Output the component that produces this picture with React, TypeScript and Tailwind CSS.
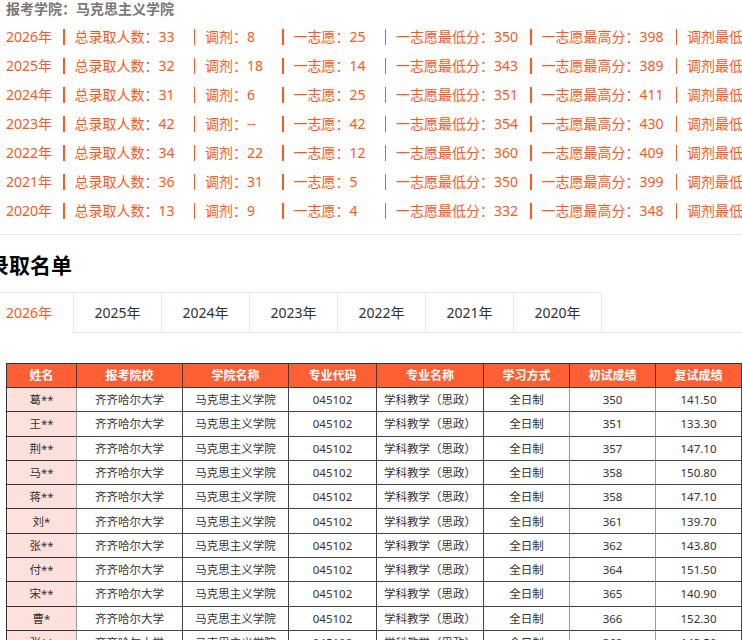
import React from "react";

// ─── Data ────────────────────────────────────────────────────────────────────

type YearStat = {
  year: string;
  total: string;
  adjust: string;
  first: string;
  min: string;
  max: string;
  adjustMin: string;
};

const stats: YearStat[] = [
  { year: "2026", total: "33", adjust: "8", first: "25", min: "350", max: "398", adjustMin: "--" },
  { year: "2025", total: "32", adjust: "18", first: "14", min: "343", max: "389", adjustMin: "--" },
  { year: "2024", total: "31", adjust: "6", first: "25", min: "351", max: "411", adjustMin: "--" },
  { year: "2023", total: "42", adjust: "--", first: "42", min: "354", max: "430", adjustMin: "--" },
  { year: "2022", total: "34", adjust: "22", first: "12", min: "360", max: "409", adjustMin: "--" },
  { year: "2021", total: "36", adjust: "31", first: "5", min: "350", max: "399", adjustMin: "--" },
  { year: "2020", total: "13", adjust: "9", first: "4", min: "332", max: "348", adjustMin: "--" },
];

const tabs = ["2026年", "2025年", "2024年", "2023年", "2022年", "2021年", "2020年"];

const headers = ["姓名", "报考院校", "学院名称", "专业代码", "专业名称", "学习方式", "初试成绩", "复试成绩"];

const students: [string, string, string][] = [
  ["葛**", "350", "141.50"],
  ["王**", "351", "133.30"],
  ["荆**", "357", "147.10"],
  ["马**", "358", "150.80"],
  ["蒋**", "358", "147.10"],
  ["刘*", "361", "139.70"],
  ["张**", "362", "143.80"],
  ["付**", "364", "151.50"],
  ["宋**", "365", "140.90"],
  ["曹*", "366", "152.30"],
  ["张**", "369", "143.50"],
  ["李**", "370", "145.20"],
];

const FONT = "font-['Noto_Sans','Noto_Sans_CJK_SC',sans-serif]";

// ─── Stat row ────────────────────────────────────────────────────────────────

function Bar() {
  return <span className="inline-block w-[1.5px] h-[16px] bg-[#ff5722] mr-[10px] shrink-0" />;
}

function StatRow({ s }: { s: YearStat }) {
  return (
    <div className="flex items-center h-[29px] whitespace-nowrap text-[14px] text-[#ff5722]">
      <span className="w-[57px] shrink-0">{s.year}年</span>
      <Bar />
      <span className="w-[119px] shrink-0">总录取人数：{s.total}</span>
      <Bar />
      <span className="w-[77px] shrink-0">调剂：{s.adjust}</span>
      <Bar />
      <span className="w-[91px] shrink-0">一志愿：{s.first}</span>
      <Bar />
      <span className="w-[134px] shrink-0">一志愿最低分：{s.min}</span>
      <Bar />
      <span className="w-[134px] shrink-0">一志愿最高分：{s.max}</span>
      <Bar />
      <span className="shrink-0">调剂最低分：{s.adjustMin}</span>
    </div>
  );
}

// ─── Tabs ────────────────────────────────────────────────────────────────────

function YearTabs() {
  return (
    <div className="flex h-[41px] mt-[12px]">
      <div className="flex -ml-[15px] border-t border-r border-[#e4e7ed] rounded-tr-[4px] shrink-0">
        {tabs.map((t, i) => (
          <div
            key={t}
            className={
              i === 0
                ? "w-[88px] h-[40px] leading-[39px] text-center text-[14px] text-[#ff5722] border-b border-white"
                : "w-[88px] h-[40px] leading-[39px] text-center text-[14px] text-[#303133] border-l border-b border-[#e4e7ed]"
            }
          >
            {t}
          </div>
        ))}
      </div>
      <div className="flex-1 border-b border-[#e4e7ed]" />
    </div>
  );
}

// ─── Admission table ─────────────────────────────────────────────────────────

const cols = "grid grid-cols-[70px_106px_106px_88px_107px_86px_86px_86px]";

function AdmissionTable() {
  return (
    <div className="ml-[6px] mt-[30px] border-l border-t border-[#333] w-[736px]">
      <div className={`${cols} h-[24px] bg-[#ff5f34]`}>
        {headers.map((h) => (
          <div
            key={h}
            className="flex items-center justify-center border-r border-b border-[#5a3328] text-[12px] font-bold text-white"
          >
            {h}
          </div>
        ))}
      </div>
      {students.map(([name, score, retest], i) => (
        <div key={i} className={`${cols} h-[24.3px] text-[11.5px] text-[#333]`}>
          <div className="flex items-center justify-center bg-[#fde1dc] border-r border-b border-[#9a9a9a] border-b-[#333]">
            {name}
          </div>
          <div className="flex items-center justify-center border-r border-b border-[#444]">齐齐哈尔大学</div>
          <div className="flex items-center justify-center border-r border-b border-[#444]">马克思主义学院</div>
          <div className="flex items-center justify-center border-r border-b border-[#444]">045102</div>
          <div className="flex items-center justify-center border-r border-b border-[#444]">学科教学（思政）</div>
          <div className="flex items-center justify-center border-r border-b border-[#9a9a9a] border-b-[#444]">全日制</div>
          <div className="flex items-center justify-center border-r border-b border-[#9a9a9a] border-b-[#444]">{score}</div>
          <div className="flex items-center justify-center border-r border-b border-[#444]">{retest}</div>
        </div>
      ))}
    </div>
  );
}

// ─── Page ────────────────────────────────────────────────────────────────────

export default function App() {
  return (
    <div className={`w-[742px] h-[640px] overflow-hidden bg-white ${FONT}`}>
      <div className="pl-[6px]">
        <div className="h-[18px] leading-[18px] mb-[4px] text-[14px] font-bold text-[#777]">
          报考学院：马克思主义学院
        </div>
        {stats.map((s) => (
          <StatRow key={s.year} s={s} />
        ))}
      </div>
      <div className="mt-[9px] border-t border-[#e4e4e4]" />
      <div className="mt-[15px] -ml-[12px] h-[30px] leading-[30px] text-[21px] font-bold text-black">
        录取名单
      </div>
      <YearTabs />
      <AdmissionTable />
    </div>
  );
}
